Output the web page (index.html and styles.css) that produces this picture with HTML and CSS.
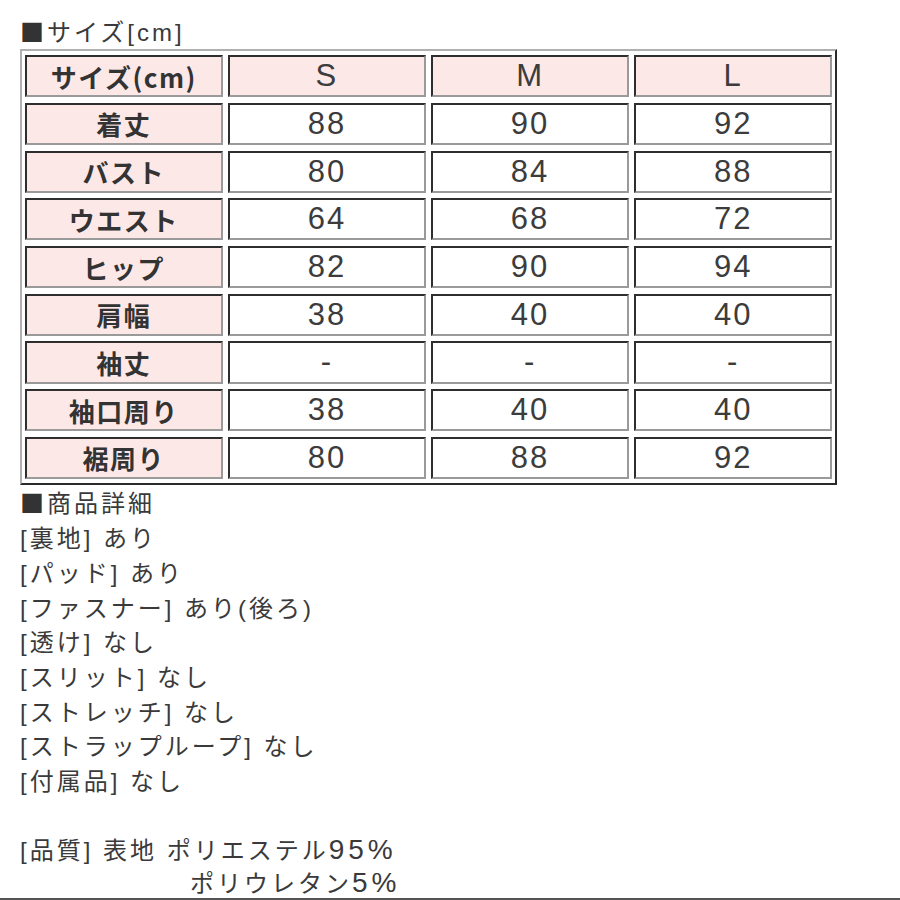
FILE: index.html
```html
<!DOCTYPE html>
<html lang="ja">
<head>
<meta charset="utf-8">
<title>サイズ</title>
<link rel="stylesheet" href="styles.css">
</head>
<body>
<div class="page">
  <p class="line title"><span class="sq">■</span>サイズ[cm]</p>
  <div class="size-table">
    <div class="cell head">サイズ(cm)</div><div class="cell pink">S</div><div class="cell pink">M</div><div class="cell pink">L</div>
    <div class="cell head">着丈</div><div class="cell">88</div><div class="cell">90</div><div class="cell">92</div>
    <div class="cell head">バスト</div><div class="cell">80</div><div class="cell">84</div><div class="cell">88</div>
    <div class="cell head">ウエスト</div><div class="cell">64</div><div class="cell">68</div><div class="cell">72</div>
    <div class="cell head">ヒップ</div><div class="cell">82</div><div class="cell">90</div><div class="cell">94</div>
    <div class="cell head">肩幅</div><div class="cell">38</div><div class="cell">40</div><div class="cell">40</div>
    <div class="cell head">袖丈</div><div class="cell">-</div><div class="cell">-</div><div class="cell">-</div>
    <div class="cell head">袖口周り</div><div class="cell">38</div><div class="cell">40</div><div class="cell">40</div>
    <div class="cell head">裾周り</div><div class="cell">80</div><div class="cell">88</div><div class="cell">92</div>
  </div>
  <div class="details">
    <p class="line"><span class="sq">■</span>商品詳細</p>
    <p class="line">[裏地] あり</p>
    <p class="line">[パッド] あり</p>
    <p class="line">[ファスナー] あり(後ろ)</p>
    <p class="line">[透け] なし</p>
    <p class="line">[スリット] なし</p>
    <p class="line">[ストレッチ] なし</p>
    <p class="line">[ストラップループ] なし</p>
    <p class="line">[付属品] なし</p>
    <p class="line blank">&nbsp;</p>
    <p class="line">[品質] 表地 ポリエステル<span class="num">95%</span></p>
    <p class="line indent">ポリウレタン<span class="num">5%</span></p>
  </div>
</div>
</body>
</html>
```
FILE: styles.css
```css
html, body {
  margin: 0;
  padding: 0;
  overflow: hidden;
  background: #ffffff;
}
body {
  height: 900px;
  box-sizing: border-box;
  border-bottom: 2px solid #555555;
  font-family: "Liberation Sans", "Noto Sans CJK JP", sans-serif;
  color: #3a3a3a;
}
.page {
  padding: 14px 0 0 20px;
}
.line {
  margin: 0;
  font-size: 24px;
  letter-spacing: 3px;
  line-height: 34.7px;
  white-space: pre;
}
.title {
  margin-bottom: -2px;
}
.num {
  font-size: 28px;
  letter-spacing: 4px;
  line-height: 1;
}
.sq {
  font-family: "Noto Sans CJK JP", sans-serif;
  color: #333333;
}
.size-table {
  display: grid;
  grid-template-columns: repeat(4, 1fr);
  grid-auto-rows: 42.2px;
  gap: 5.5px 5.5px;
  padding: 4.5px 3px;
  width: 817px;
  box-sizing: border-box;
  border-style: solid;
  border-width: 2px;
  border-color: #b0b0b0 #2a2a2a #2a2a2a #b0b0b0;
}
.cell {
  display: flex;
  align-items: center;
  justify-content: center;
  box-sizing: border-box;
  border-style: solid;
  border-width: 2px;
  border-color: #2e2e2e #9a9a9a #9a9a9a #2e2e2e;
  font-size: 31px;
  letter-spacing: 2px;
  color: #3c3c3c;
  background: #ffffff;
}
.pink {
  background: #fde8e8;
}
.head {
  background: #fde8e8;
  font-family: "Noto Sans CJK JP", "Liberation Sans", sans-serif;
  font-weight: 700;
  font-size: 26px;
  letter-spacing: 1.5px;
  color: #333333;
}
.details {
  margin-top: 0;
}
.indent {
  padding-left: 170px;
  margin-top: -2px;
}
```
